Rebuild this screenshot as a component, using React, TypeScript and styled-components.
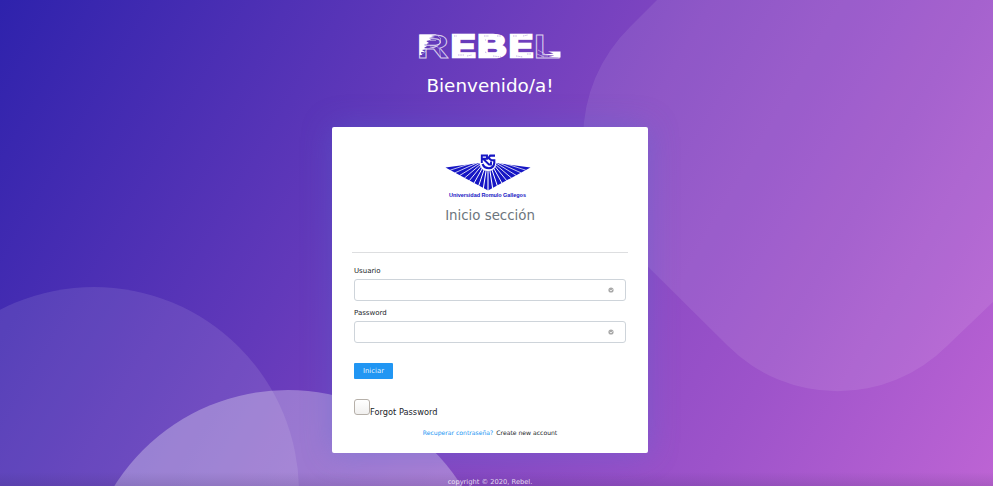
import React from "react";
import styled, { createGlobalStyle } from "styled-components";

const GlobalStyle = createGlobalStyle`
  * { box-sizing: border-box; }
  body { margin: 0; overflow: hidden; font-family: "DejaVu Sans", sans-serif; }
`;

const Page = styled.main`
  position: relative;
  width: 100%;
  height: 486px;
  overflow: hidden;
  display: flex;
  flex-direction: column;
  align-items: center;
  padding-right: 13px;
  background: linear-gradient(120deg, #2e22ac 0%, #6239ba 35%, #8447c2 56%, #9d53ca 77%, #bd64d4 100%);
`;

const Backdrop = styled.svg`
  position: absolute;
  inset: 0;
`;

const Header = styled.header`
  position: relative;
  height: 127px;
  padding-top: 21px;
  display: flex;
  flex-direction: column;
  align-items: center;
`;

const Wordmark = styled.svg`
  display: block;
  width: 156px;
  height: 50px;
  flex: none;
  overflow: visible;
`;

const Welcome = styled.h1`
  margin: 4px 0 0;
  font-size: 18.35px;
  line-height: 22px;
  font-weight: 400;
  color: #fff;
  white-space: nowrap;
`;

const Card = styled.section`
  position: relative;
  width: 316px;
  height: 326px;
  flex: none;
  padding: 25px 20px 0;
  border-radius: 2px;
  background: #fff;
  box-shadow: 0 0 30px rgba(75, 110, 210, 0.34);
`;

const CardHead = styled.div`
  height: 101px;
  display: flex;
  flex-direction: column;
  align-items: center;
  border-bottom: 1px solid #dddee0;
`;

const Emblem = styled.svg`
  display: block;
  width: 90px;
  height: 48px;
  margin-right: 2px;
`;

const Title = styled.h2`
  margin: 7px 0 0;
  font-size: 13.35px;
  line-height: 18px;
  font-weight: 400;
  color: #6c757d;
`;

const Form = styled.form`
  padding: 13px 2px 0;
`;

const Field = styled.div`
  height: 42px;
`;

const Label = styled.label`
  display: block;
  height: 13px;
  padding-top: 1px;
  font-size: 7px;
  line-height: 9px;
  color: #212529;
`;

const InputBox = styled.div`
  height: 22px;
  display: flex;
  align-items: center;
  padding-right: 11px;
  border: 1px solid #ced4da;
  border-radius: 3px;
`;

const Input = styled.input`
  flex: 1;
  min-width: 0;
  border: 0;
  outline: 0;
  background: transparent;
  font: 8px "DejaVu Sans", sans-serif;
`;

const Submit = styled.button`
  display: block;
  width: 39px;
  height: 16px;
  margin-top: 13px;
  padding: 0 0 1px;
  border: 0;
  border-radius: 1px;
  background: #2196f3;
  color: rgba(255, 255, 255, 0.9);
  font: 6.9px "DejaVu Sans", sans-serif;
`;

const CheckRow = styled.label`
  display: flex;
  margin-top: 20px;
  height: 18px;
  font-size: 8.25px;
  line-height: 10px;
  color: #212529;
`;

const Checkbox = styled.input`
  appearance: none;
  width: 16px;
  height: 16px;
  margin: 0;
  border: 1px solid #b6b0a9;
  border-radius: 3px;
  background: linear-gradient(#fff, #f1f0ef);
`;

const CheckText = styled.span`
  padding-top: 8px;
`;

const Links = styled.nav`
  display: flex;
  justify-content: center;
  gap: 3px;
  margin-top: 12px;
  font-size: 6.1px;
  line-height: 8px;
`;

const Link = styled.a<{ $accent?: boolean }>`
  color: ${({ $accent }) => ($accent ? "#2196f3" : "#212529")};
  text-decoration: none;
`;

const Footer = styled.footer`
  position: relative;
  width: 100%;
  padding-top: 25px;
  text-align: center;
  font-size: 6.7px;
  line-height: 8px;
  color: rgba(255, 255, 255, 0.8);
`;

function Shapes() {
  return (
    <Backdrop width="993" height="486" viewBox="0 0 993 486" aria-hidden>
      <defs>
        <linearGradient id="foot" x1="0" y1="0" x2="0" y2="1">
          <stop offset="0" stopColor="#302050" stopOpacity="0" />
          <stop offset="1" stopColor="#302050" stopOpacity=".14" />
        </linearGradient>
      </defs>
      <path
        d="M657 0 630 27A155 155 0 0 0 630 249L728 346A155 155 0 0 0 947 346L993 302V0Z"
        fill="#fff"
        fillOpacity=".09"
      />
      <circle cx="94" cy="492" r="205" fill="#fff" fillOpacity=".1" />
      <circle cx="288" cy="595" r="205" fill="#fff" fillOpacity=".3" />
      <rect y="472" width="993" height="14" fill="url(#foot)" />
    </Backdrop>
  );
}

const LETTER = { fontFamily: "Liberation Sans", fontWeight: 700, fontSize: 30 };

function Logo() {
  return (
    <Wordmark viewBox="412 21 156 50" role="img" aria-label="Rebel">
      <g {...LETTER} fill="none" stroke="#fff" strokeOpacity=".75" strokeWidth=".7">
        <text transform="translate(416.500 58) scale(1.5 1.13)">R</text>
        <text transform="translate(533.500 58) scale(1.47 1.13)">L</text>
      </g>
      <g {...LETTER} fill="#fff" stroke="#fff" strokeWidth="2.600">
        <text transform="translate(451 56.900) scale(1.22 1.03)">E</text>
        <text transform="translate(477.500 56.900) scale(1.34 1.03)">B</text>
        <text transform="translate(509 56.900) scale(1.2 1.03)">E</text>
      </g>
      <path
        d="M419.500 34.500H437L431 36 435 37 429 38 431 40 426 41 429 43 424 45 427 46 424 48 428 49 422 50 425 52 421 52 422 55 419.500 55Z"
        fill="#fff"
      />
      <path d="M427 48.500l8-1 4-2M548 51.500l12.500 0v6l-12-.5 6-1.500-10-.5 9-1.500z" fill="#fff" />
      <g fill="none" stroke="#fff" strokeWidth=".7" opacity=".6">
        <path d="M430 40.500h6M430 46h6M438 36l2.500 2v5l-4 3 3 3 1 8M421 55l5-4" />
        <path d="M537 54l7 3M538 50l7 4M541 56h7" />
      </g>
      <path
        d="M454 36h3M458 55h6M467 56l5-1M484 36l5 0M485 40h1M493 56l8 1M497 36h4M485 52l2 1M513 36h4M516 56l7 1M523 36l5-1M527 54h4"
        stroke="#7950c2"
        strokeWidth=".7"
        strokeDasharray="1.500 .8"
        opacity=".6"
      />
    </Wordmark>
  );
}

// White gaps that split the fan into rays, thinner toward its shallow corners.
const GAPS = Array.from({ length: 17 }, (_, i) => {
  const step = (i - 8) / 9;
  const spread = Math.abs(step);
  return { x: 44 + 42.5 * step, y: 39.5 - 24 * spread, width: 1.1 - 0.45 * spread };
});

function UniversityEmblem() {
  return (
    <Emblem viewBox="0 0 90 48" role="img" aria-label="Universidad Romulo Gallegos">
      <path d="M1.500 15.500 35 11H53L86.500 15.500 44 38.500Z" fill="#1616c4" />
      <g stroke="#fff">
        {GAPS.map((g) => (
          <line key={g.x} x1="44" y1="6" x2={g.x} y2={g.y} strokeWidth={g.width} />
        ))}
      </g>
      <path d="M35.500 1V10Q36 19 44 19T52.500 10V1Z" fill="#fff" />
      <g fill="none" stroke="#1616c4">
        <path d="M37.800 11V3.500H43V6.800H39L45 12.500H47V9.500" strokeWidth="1.900" />
        <path d="M51 3.600H46.200L44.500 6 47.500 8.300H50.300V11Q49.500 16.200 45 16.200Q40.300 16.200 38.500 12" strokeWidth="2.100" />
      </g>
      <text x="5" y="44.800" textLength="77" fontFamily="Liberation Sans" fontSize="5.500" fontWeight="700" fill="#1616c4">
        Universidad Romulo Gallegos
      </text>
    </Emblem>
  );
}

function StatusIcon() {
  return (
    <svg width="6" height="6" viewBox="0 0 6 6" aria-hidden>
      <circle cx="3" cy="3" r="2.600" fill="#a8a8a8" />
      <path d="m1.800 2.900 1.200 1.100 1.500-1.600" fill="none" stroke="#fff" strokeWidth=".8" />
    </svg>
  );
}

function TextField({ id, label, type }: { id: string; label: string; type: string }) {
  return (
    <Field>
      <Label htmlFor={id}>{label}</Label>
      <InputBox>
        <Input id={id} type={type} />
        <StatusIcon />
      </InputBox>
    </Field>
  );
}

export default function App() {
  return (
    <>
      <GlobalStyle />
      <Page>
        <Shapes />
        <Header>
          <Logo />
          <Welcome>Bienvenido/a!</Welcome>
        </Header>
        <Card>
          <CardHead>
            <UniversityEmblem />
            <Title>Inicio sección</Title>
          </CardHead>
          <Form>
            <TextField id="user" label="Usuario" type="text" />
            <TextField id="password" label="Password" type="password" />
            <Submit type="button">Iniciar</Submit>
            <CheckRow>
              <Checkbox type="checkbox" />
              <CheckText>Forgot Password</CheckText>
            </CheckRow>
            <Links>
              <Link $accent>Recuperar contraseña?</Link>
              <Link>Create new account</Link>
            </Links>
          </Form>
        </Card>
        <Footer>copyright © 2020, Rebel.</Footer>
      </Page>
    </>
  );
}
